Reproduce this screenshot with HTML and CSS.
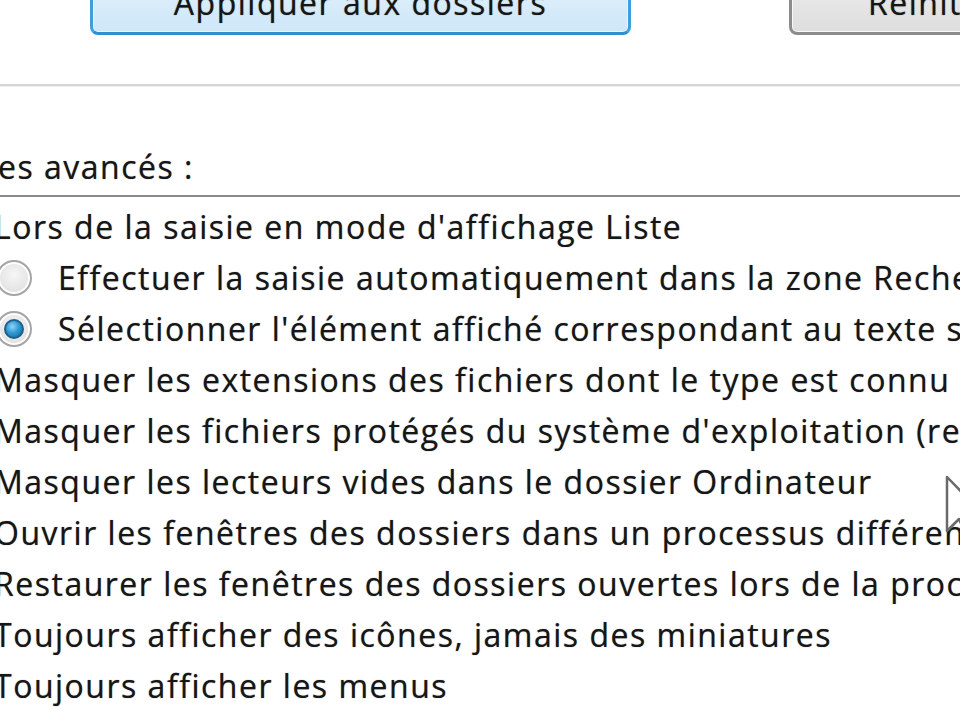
FILE: index.html
```html
<!DOCTYPE html>
<html lang="fr">
<head>
<meta charset="utf-8">
<title>Options des dossiers</title>
<link rel="stylesheet" href="styles.css">
</head>
<body>
<div class="screen">
  <div class="btn-row">
    <div class="btn btn-apply"><span class="btn-text">Appliquer aux dossiers</span></div>
    <div class="btn btn-reset"><span class="btn-text">Réinitialiser les dossiers</span></div>
  </div>
  <div class="sep"></div>
  <div class="label">es avancés :</div>
  <div class="tree">
    <div class="row">Lors de la saisie en mode d'affichage Liste</div>
    <div class="row radio-row"><span class="radio"></span><span>Effectuer la saisie automatiquement dans la zone Recherche</span></div>
    <div class="row radio-row"><span class="radio checked"></span><span>Sélectionner l'élément affiché correspondant au texte saisi</span></div>
    <div class="row">Masquer les extensions des fichiers dont le type est connu</div>
    <div class="row">Masquer les fichiers protégés du système d'exploitation (recommandé)</div>
    <div class="row">Masquer les lecteurs vides dans le dossier Ordinateur</div>
    <div class="row">Ouvrir les fenêtres des dossiers dans un processus différent</div>
    <div class="row">Restaurer les fenêtres des dossiers ouvertes lors de la procédure</div>
    <div class="row">Toujours afficher des icônes, jamais des miniatures</div>
    <div class="row">Toujours afficher les menus</div>
  </div>
  <svg class="cursor" width="44" height="70" viewBox="0 0 44 70">
    <path d="M2 2 L2 56 L14 44 L23 64 L31 60 L22 41 L40 41 Z" fill="#ffffff" stroke="#6a6a6a" stroke-width="2.5" stroke-linejoin="round"/>
  </svg>
</div>
</body>
</html>
```
FILE: styles.css
```css
html, body {
  margin: 0;
  padding: 0;
  background: #ffffff;
}
.screen {
  position: relative;
  width: 960px;
  height: 720px;
  overflow: hidden;
  font-family: "Open Sans", "Noto Sans", sans-serif;
  font-size: 32px;
  letter-spacing: 1.5px;
  color: #161616;
  white-space: nowrap;
  text-shadow: 0 0 1px rgba(0, 0, 0, 0.55);
}
.btn-row {
  display: flex;
  margin-top: -42px;
  padding-left: 90px;
}
.btn {
  box-sizing: border-box;
  height: 77px;
  border-radius: 8px;
  display: flex;
  align-items: flex-end;
  justify-content: center;
  padding-bottom: 13px;
  flex: none;
}
.btn-text {
  line-height: 32px;
}
.btn-apply {
  width: 541px;
  border: 3px solid #3d9fdb;
  border-bottom-color: #2f8fcf;
  background: linear-gradient(#e6f3fc, #cfe7f8);
  box-shadow: inset 0 0 0 1px #e9f6fe;
}
.btn-reset {
  width: 420px;
  margin-left: 158px;
  border: 3px solid #8c8c8c;
  background: linear-gradient(#f0f0f0, #dedede);
  box-shadow: inset 0 0 0 1px #f8f8f8;
  justify-content: flex-start;
  padding-left: 76px;
}
.sep {
  margin-top: 49px;
  height: 2px;
  background: #d6d6d6;
  border-bottom: 1px solid #ededed;
}
.label {
  margin-top: 54px;
  line-height: 51px;
  margin-left: -2px;
}
.tree {
  margin-top: 3px;
  border-top: 2px solid #8a8a8a;
  padding-top: 4px;
}
.row {
  line-height: 51px;
  height: 51px;
  margin-left: -6px;
  display: flex;
  align-items: center;
}
.radio-row {
  margin-left: -4px;
  gap: 26px;
}
.radio {
  box-sizing: border-box;
  flex: none;
  width: 36px;
  height: 36px;
  border-radius: 50%;
  border: 2px solid #a6a6a6;
  background: radial-gradient(circle at 50% 40%, #f6f6f6 0%, #e2e2e2 70%, #d4d4d4 100%);
  box-shadow: inset 0 0 0 2px #ffffff;
  display: flex;
  align-items: center;
  justify-content: center;
}
.radio.checked::after {
  content: "";
  width: 20px;
  height: 20px;
  border-radius: 50%;
  border: 2px solid #1f5f8c;
  background: radial-gradient(circle at 40% 35%, #8fd3f7 0%, #2f9bd6 45%, #15628f 100%);
  box-sizing: border-box;
}
.cursor {
  position: absolute;
  left: 945px;
  top: 475px;
}
```
